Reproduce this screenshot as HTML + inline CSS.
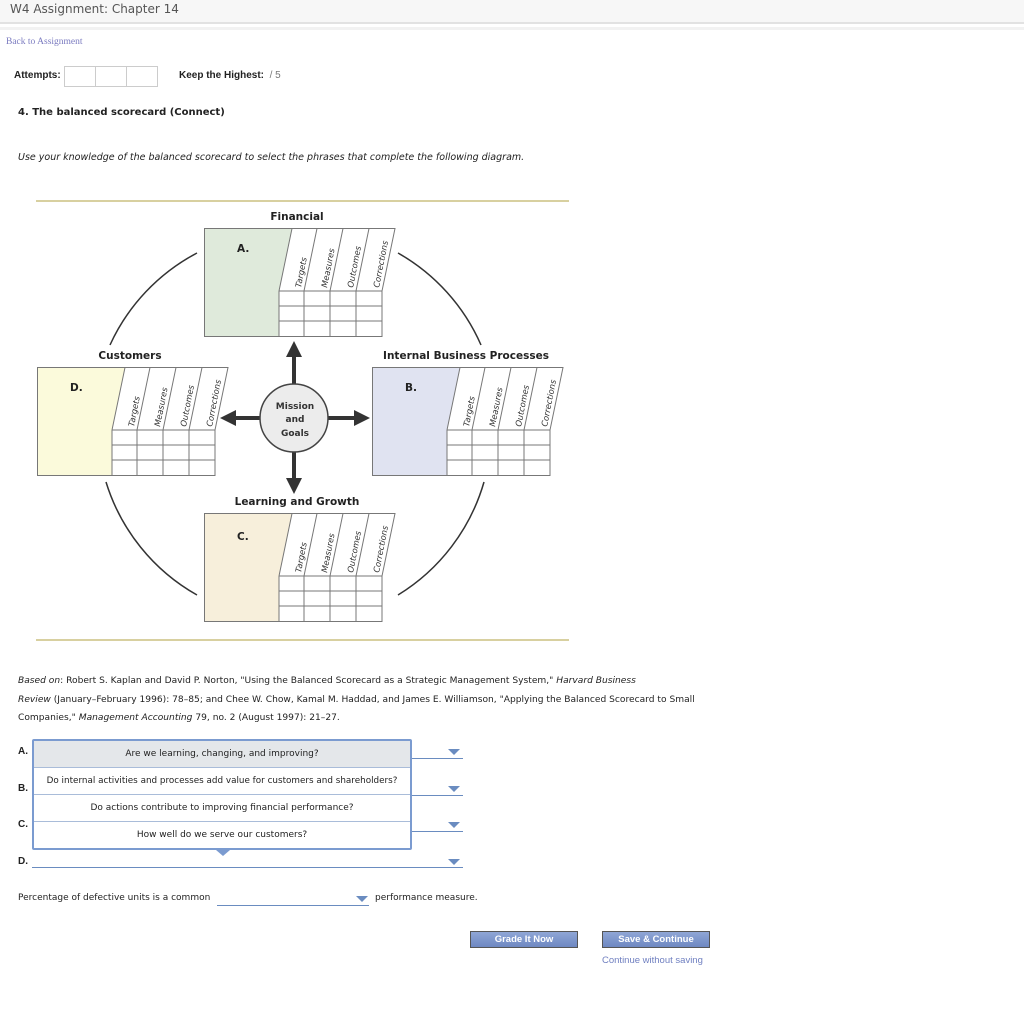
<!DOCTYPE html>
<html><head><meta charset="utf-8"><style>
body{margin:0;background:#fff;font-family:"DejaVu Sans","Liberation Sans",sans-serif;color:#222;width:1024px;height:1016px;position:relative;overflow:hidden}
.hdr{position:absolute;left:0;top:0;width:1024px;height:22px;background:#f7f7f7;border-bottom:2px solid #e2e2e2}
.hdr span{position:absolute;left:10px;top:2px;font-size:12px;color:#555}
.a{position:absolute;white-space:nowrap}
.lbl{font-family:"Liberation Sans",sans-serif;font-weight:bold;font-size:10px}
.sel{position:absolute;height:1px;background:#6a8cc0}
.tri{position:absolute;width:0;height:0;border-left:6px solid transparent;border-right:6px solid transparent;border-top:6px solid #6a8cc0}
.opt{height:26px;border-bottom:1px solid #a9bcd9;font-size:9px;text-align:center;line-height:26px}
.btn{position:absolute;height:15px;border:1px solid #555;background:linear-gradient(#8fa6d6,#6e88c2);color:#fff;font-family:"Liberation Sans",sans-serif;font-weight:bold;font-size:9.5px;text-align:center;line-height:15px}
</style></head><body>
<div class="hdr"><span>W4 Assignment: Chapter 14</span></div>
<div style="position:absolute;left:0;top:27px;width:1024px;height:3px;background:#f2f2f2"></div>
<div class="a" style="left:6px;top:37px;font-family:'Liberation Serif',serif;font-size:9.5px;color:#7b7bc0">Back to Assignment</div>
<div class="a lbl" style="left:14px;top:70px">Attempts:</div>
<div class="a" style="left:64px;top:66px;width:92px;height:19px;border:1px solid #ccc;display:flex"><div style="flex:1;border-right:1px solid #ccc"></div><div style="flex:1;border-right:1px solid #ccc"></div><div style="flex:1"></div></div>
<div class="a lbl" style="left:179px;top:70px">Keep the Highest: <span style="font-weight:normal;color:#777">&nbsp;/ 5</span></div>
<div class="a" style="left:18px;top:107px;font-size:10px;font-weight:bold">4. The balanced scorecard (Connect)</div>
<div class="a" style="left:18px;top:152px;font-size:9.5px;font-style:italic">Use your knowledge of the balanced scorecard to select the phrases that complete the following diagram.</div>

<svg class="a" style="left:0;top:0" width="600" height="660" font-family="DejaVu Sans, sans-serif">
<defs>
<marker id="ar" markerWidth="4" markerHeight="4" refX="1" refY="2" orient="auto"><path d="M0,0 L4,2 L0,4z" fill="#333"/></marker>
<g id="card">
<path d="M0,0.5 L88,0.5 M75,63 L75,108.5 L0.5,108.5 L0.5,0.5" stroke="#777" fill="none"/>
<path d="M75,63 L178,63 M75,78 L178,78 M75,93 L178,93 M75,108.5 L178,108.5 M100,63 L100,109 M126,63 L126,109 M152,63 L152,109 M178,63 L178,109" stroke="#777" fill="none"/>
<path d="M88,0.5 L191,0.5 L178,63 M75,63 L88,0.5 M100,63 L113,0.5 M126,63 L139,0.5 M152,63 L165,0.5" stroke="#777" fill="none"/>
<g font-size="8.3" font-style="italic" fill="#333">
<text transform="translate(97,60) rotate(-79)">Targets</text>
<text transform="translate(123,60) rotate(-79)">Measures</text>
<text transform="translate(149,60) rotate(-79)">Outcomes</text>
<text transform="translate(175,60) rotate(-79)">Corrections</text>
</g>
</g>
</defs>
<line x1="36" y1="201" x2="569" y2="201" stroke="#d8d0a0" stroke-width="2"/>
<line x1="36" y1="640" x2="569" y2="640" stroke="#d8d0a0" stroke-width="2"/>
<g fill="none" stroke="#333" stroke-width="1.5">
<path d="M197,253 A196,196 0 0 0 110,345"/>
<path d="M398,253 A196,196 0 0 1 481,345"/>
<path d="M106,482 A196,196 0 0 0 197,595"/>
<path d="M484,482 A196,196 0 0 1 398,595"/>
</g>
<g>
<polygon points="204.5,228.5 292,228.5 279,291 279,336.5 204.5,336.5" fill="#dfeadb"/>
<use href="#card" x="204" y="228"/>
<polygon points="37.5,367.5 125,367.5 112,430 112,475.5 37.5,475.5" fill="#fbfadb"/>
<use href="#card" x="37" y="367"/>
<polygon points="372.5,367.5 460,367.5 447,430 447,475.5 372.5,475.5" fill="#e0e3f1"/>
<use href="#card" x="372" y="367"/>
<polygon points="204.5,513.5 292,513.5 279,576 279,621.5 204.5,621.5" fill="#f7efdb"/>
<use href="#card" x="204" y="513"/>
</g>
<g font-weight="bold" font-size="10.5" fill="#222">
<text x="237" y="252">A.</text><text x="70" y="391">D.</text><text x="405" y="391">B.</text><text x="237" y="540">C.</text>
<text x="297" y="220" text-anchor="middle">Financial</text>
<text x="130" y="359" text-anchor="middle">Customers</text>
<text x="466" y="359" text-anchor="middle">Internal Business Processes</text>
<text x="297" y="505" text-anchor="middle">Learning and Growth</text>
</g>
<g stroke="#333" stroke-width="4" marker-end="url(#ar)">
<line x1="294" y1="385" x2="294" y2="353"/>
<line x1="294" y1="452" x2="294" y2="482"/>
<line x1="261" y1="418" x2="232" y2="418"/>
<line x1="328" y1="418" x2="358" y2="418"/>
</g>
<circle cx="294" cy="418" r="34" fill="#ececec" stroke="#444" stroke-width="1.5"/>
<g font-size="9" font-weight="bold" fill="#333" text-anchor="middle">
<text x="295" y="409">Mission</text><text x="295" y="422">and</text><text x="295" y="436">Goals</text>
</g>
</svg>

<div class="a" style="left:18px;top:672px;font-size:9.1px;line-height:18.5px"><i>Based on</i>: Robert S. Kaplan and David P. Norton, "Using the Balanced Scorecard as a Strategic Management System," <i>Harvard Business</i><br><i>Review</i> (January–February 1996): 78–85; and Chee W. Chow, Kamal M. Haddad, and James E. Williamson, "Applying the Balanced Scorecard to Small<br>Companies," <i>Management Accounting</i> 79, no. 2 (August 1997): 21–27.</div>

<div class="a lbl" style="left:18px;top:746px">A.</div>
<div class="a lbl" style="left:18px;top:783px">B.</div>
<div class="a lbl" style="left:18px;top:819px">C.</div>
<div class="a lbl" style="left:18px;top:856px">D.</div>
<div class="sel" style="left:32px;top:758px;width:431px"></div><div class="tri" style="left:448px;top:749px"></div>
<div class="sel" style="left:32px;top:795px;width:431px"></div><div class="tri" style="left:448px;top:786px"></div>
<div class="sel" style="left:32px;top:831px;width:431px"></div><div class="tri" style="left:448px;top:822px"></div>
<div class="sel" style="left:32px;top:867px;width:431px"></div><div class="tri" style="left:448px;top:859px"></div>
<div class="a" style="left:32px;top:739px;width:376px;border:2px solid #7b9bd0;border-radius:2px;background:#fff">
<div class="opt" style="background:#e4e7ea">Are we learning, changing, and improving?</div>
<div class="opt" style="font-size:8.8px">Do internal activities and processes add value for customers and shareholders?</div>
<div class="opt">Do actions contribute to improving financial performance?</div>
<div class="opt" style="border-bottom:none">How well do we serve our customers?</div>
</div>
<div class="a" style="left:216px;top:850px;border-left:7px solid transparent;border-right:7px solid transparent;border-top:6px solid #7b9bd0"></div>

<div class="a" style="left:18px;top:893px;font-size:9px">Percentage of defective units is a common</div>
<div class="sel" style="left:217px;top:905px;width:152px"></div><div class="tri" style="left:356px;top:896px"></div>
<div class="a" style="left:375px;top:893px;font-size:9px">performance measure.</div>

<div class="btn" style="left:470px;top:931px;width:106px">Grade It Now</div>
<div class="btn" style="left:602px;top:931px;width:106px">Save &amp; Continue</div>
<div class="a" style="left:602px;top:955px;font-family:'Liberation Sans',sans-serif;font-size:9.5px;color:#6f7fc0">Continue without saving</div>
</body></html>
